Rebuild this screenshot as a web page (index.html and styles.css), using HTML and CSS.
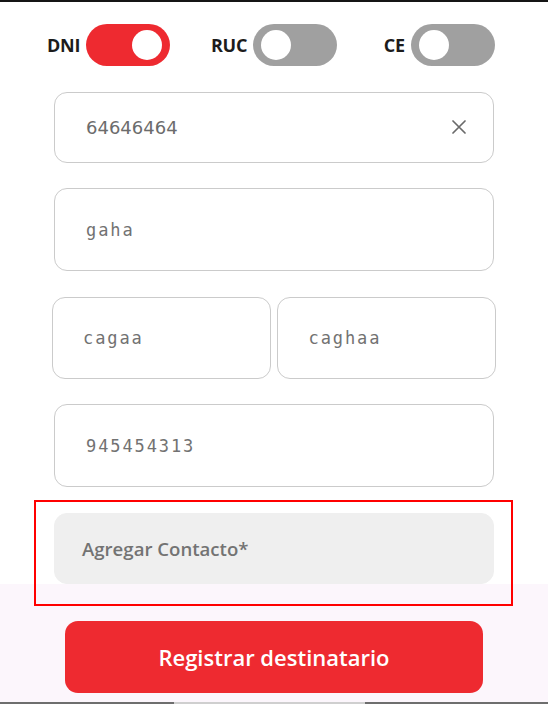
FILE: index.html
```html
<!DOCTYPE html>
<html lang="es">
<head>
<meta charset="utf-8">
<title>Registrar destinatario</title>
<link rel="stylesheet" href="styles.css">
</head>
<body>
<div class="screen">
  <div class="form">
    <div class="doc-types">
      <div class="doc-type">
        <span class="doc-label">DNI</span>
        <span class="switch switch-on"><span class="knob"></span></span>
      </div>
      <div class="doc-type doc-type-mid">
        <span class="doc-label">RUC</span>
        <span class="switch"><span class="knob"></span></span>
      </div>
      <div class="doc-type">
        <span class="doc-label">CE</span>
        <span class="switch"><span class="knob"></span></span>
      </div>
    </div>

    <div class="field field-short">
      <span class="value value-smooth">64646464</span>
      <svg class="clear" width="14" height="14" viewBox="0 0 14 14" aria-hidden="true">
        <path d="M1 1 L13 13 M13 1 L1 13" stroke="#6a6a6a" stroke-width="1.7" stroke-linecap="round" fill="none"/>
      </svg>
    </div>

    <div class="field field-tall">
      <span class="value">gaha</span>
    </div>

    <div class="field-row">
      <div class="field field-half">
        <span class="value">cagaa</span>
      </div>
      <div class="field field-half field-half-right">
        <span class="value">caghaa</span>
      </div>
    </div>

    <div class="field field-tall">
      <span class="value">945454313</span>
    </div>

    <div class="field field-short field-filled">
      <span class="placeholder">Agregar Contacto*</span>
    </div>
  </div>

  <div class="footer">
    <button class="submit" type="button">Registrar destinatario</button>
  </div>

  <div class="navbar"><span class="nav-handle"></span></div>

  <div class="highlight"></div>
</div>
</body>
</html>
```

FILE: styles.css
```css
html, body {
  margin: 0;
  padding: 0;
  background: #ffffff;
}

.screen {
  position: relative;
  width: 548px;
  height: 704px;
  overflow: hidden;
  display: flex;
  flex-direction: column;
  border-top: 2px solid #151515;
  box-sizing: border-box;
  font-family: "Open Sans", "Noto Sans", sans-serif;
}

.form {
  display: flex;
  flex-direction: column;
  gap: 25.5px;
  padding: 22px 54px 0 54px;
}

.doc-types {
  display: flex;
  justify-content: space-between;
  align-items: center;
  margin: 0 -1px 0 -7px;
  height: 42px;
}

.doc-type {
  display: flex;
  align-items: center;
  gap: 6px;
}

.doc-type-mid {
  margin-right: 6px;
}

.doc-label {
  font-size: 18px;
  font-weight: 700;
  color: #1c1c1c;
  letter-spacing: -0.2px;
}

.switch {
  display: flex;
  align-items: center;
  width: 84px;
  height: 42px;
  border-radius: 21px;
  background: #a0a0a0;
  padding: 0 8px;
  box-sizing: border-box;
}

.switch-on {
  background: #ee2a30;
  justify-content: flex-end;
}

.knob {
  width: 30px;
  height: 30px;
  border-radius: 50%;
  background: #ffffff;
}

.field {
  display: flex;
  align-items: center;
  justify-content: space-between;
  border: 1px solid #cbcbcb;
  border-radius: 13px;
  padding: 0 27px 0 31px;
  box-sizing: border-box;
  background: #ffffff;
}

.field-short { height: 71px; }
.field-tall { height: 83px; }

.field-row {
  display: flex;
  gap: 6px;
  margin: 0 -2px;
}

.field-half {
  flex: 1;
  height: 82px;
  padding-left: 30px;
}

.field-half-right {
  padding-left: 31px;
}

.value {
  font-family: "DejaVu Sans Mono", "Liberation Mono", monospace;
  font-size: 17px;
  letter-spacing: 1.9px;
  color: #727272;
}

.value-smooth {
  font-family: "DejaVu Sans", "Noto Sans", sans-serif;
  font-size: 18px;
  letter-spacing: 0;
  color: #6c6c6c;
}

.clear {
  display: block;
}

.field-filled {
  background: #efefef;
  border-color: #efefef;
  padding-left: 27px;
}

.placeholder {
  font-size: 18.6px;
  font-weight: 600;
  color: #737373;
}

.footer {
  flex: 1;
  background: #fcf6fc;
  display: flex;
  justify-content: center;
  align-items: flex-start;
  padding-top: 37px;
}

.submit {
  width: 418px;
  height: 72px;
  border: none;
  border-radius: 13px;
  background: #ee2a30;
  color: #ffffff;
  font-family: "Open Sans", "Noto Sans", sans-serif;
  font-size: 22px;
  font-weight: 600;
  padding: 0;
}

.navbar {
  height: 2px;
  background: #6e6e6e;
  display: flex;
  justify-content: center;
}

.nav-handle {
  width: 191px;
  height: 2px;
  background: #cfcfcf;
  margin-left: -10px;
}

.highlight {
  position: absolute;
  left: 34px;
  top: 498px;
  width: 479px;
  height: 106px;
  border: 2.5px solid #ff0000;
  box-sizing: border-box;
  pointer-events: none;
}
```
